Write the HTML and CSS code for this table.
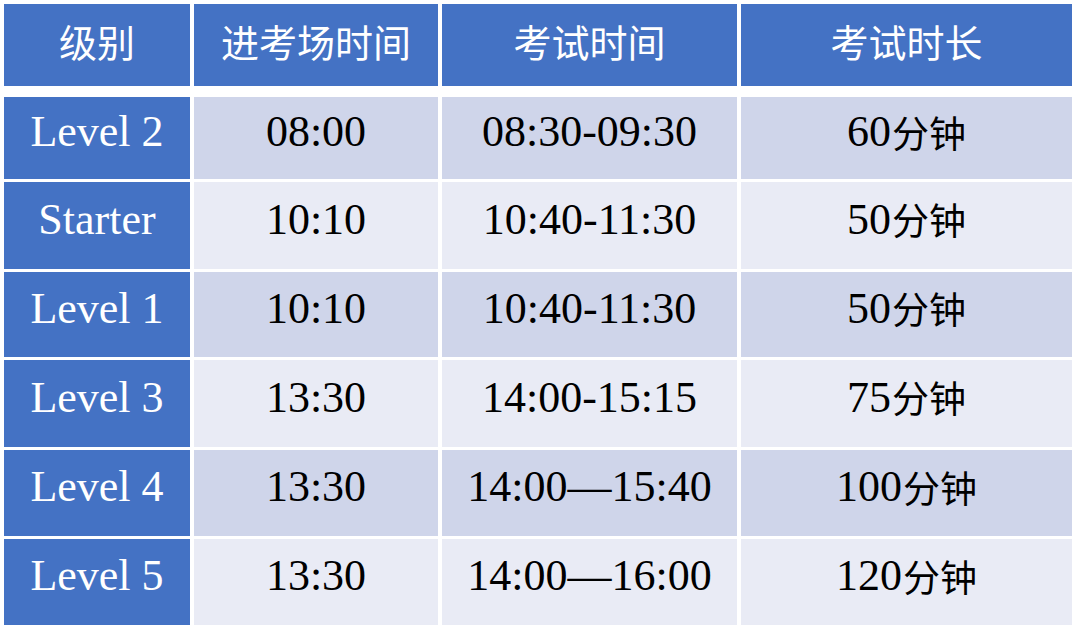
FILE: index.html
```html
<!DOCTYPE html>
<html lang="zh">
<head>
<meta charset="utf-8">
<title>考试时间表</title>
<link rel="stylesheet" href="styles.css">
</head>
<body>
<div class="table">
  <div class="row head">
    <div class="cell">级别</div>
    <div class="cell">进考场时间</div>
    <div class="cell">考试时间</div>
    <div class="cell">考试时长</div>
  </div>
  <div class="body">
    <div class="row odd r1">
      <div class="cell lvl">Level 2</div>
      <div class="cell">08:00</div>
      <div class="cell">08:30-09:30</div>
      <div class="cell">60<span class="zh">分钟</span></div>
    </div>
    <div class="row even r2">
      <div class="cell lvl">Starter</div>
      <div class="cell">10:10</div>
      <div class="cell">10:40-11:30</div>
      <div class="cell">50<span class="zh">分钟</span></div>
    </div>
    <div class="row odd r3">
      <div class="cell lvl">Level 1</div>
      <div class="cell">10:10</div>
      <div class="cell">10:40-11:30</div>
      <div class="cell">50<span class="zh">分钟</span></div>
    </div>
    <div class="row even r4">
      <div class="cell lvl">Level 3</div>
      <div class="cell">13:30</div>
      <div class="cell">14:00-15:15</div>
      <div class="cell">75<span class="zh">分钟</span></div>
    </div>
    <div class="row odd r5">
      <div class="cell lvl">Level 4</div>
      <div class="cell">13:30</div>
      <div class="cell">14:00—15:40</div>
      <div class="cell">100<span class="zh">分钟</span></div>
    </div>
    <div class="row even r6">
      <div class="cell lvl">Level 5</div>
      <div class="cell">13:30</div>
      <div class="cell">14:00—16:00</div>
      <div class="cell">120<span class="zh">分钟</span></div>
    </div>
  </div>
</div>
</body>
</html>
```
FILE: styles.css
```css
html, body {
  margin: 0;
  padding: 0;
  background: #ffffff;
}
body {
  width: 1080px;
  height: 631px;
  overflow: hidden;
}
.table {
  padding: 4px 0 0 4px;
  width: 1068px;
  font-family: "Liberation Serif", "Noto Sans CJK SC", serif;
}
.row {
  display: grid;
  grid-template-columns: 186px 244px 295px 331px;
  column-gap: 4px;
}
.cell {
  display: flex;
  align-items: center;
  justify-content: center;
  font-size: 44px;
  color: #000000;
  padding-bottom: 13px;
  box-sizing: border-box;
  white-space: nowrap;
}
.head {
  height: 82px;
}
.head .cell {
  background: #4472c4;
  color: #ffffff;
  font-family: "Noto Sans CJK SC", sans-serif;
  font-size: 38px;
  padding-bottom: 10px;
}
.body {
  margin-top: 11px;
  display: flex;
  flex-direction: column;
  row-gap: 3px;
}
.r1 { height: 82px; }
.r2 { height: 87px; }
.r3 { height: 85px; }
.r4 { height: 87px; }
.r5 { height: 86px; }
.r6 { height: 86px; }
.odd .cell { background: #cfd5ea; }
.even .cell { background: #e9ebf5; }
.row .cell.lvl {
  background: #4472c4;
  color: #ffffff;
}
.zh {
  font-family: "Noto Sans CJK SC", sans-serif;
  font-size: 37px;
  margin-left: 1px;
}
```
